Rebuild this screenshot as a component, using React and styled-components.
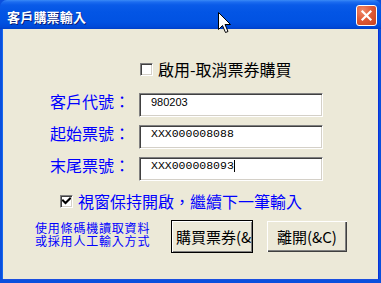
import React from "react";
import styled, { createGlobalStyle } from "styled-components";

const Global = createGlobalStyle`
  html, body { margin: 0; padding: 0; background: #ECE9D8; }
  body { width: 381px; height: 283px; overflow: hidden; }
`;

const CJK = `"Noto Sans CJK TC", "Noto Sans CJK SC", sans-serif`;

const Window = styled.div`
  position: relative;
  width: 381px;
  height: 283px;
  display: flex;
  flex-direction: column;
  box-sizing: border-box;
  background: #0A4FDD;
`;

const TitleBar = styled.div`
  height: 29px;
  flex: none;
  display: flex;
  align-items: flex-start;
  justify-content: space-between;
  padding: 0 4px 0 7px;
  background: linear-gradient(
    to bottom,
    #3A8AF6 0px,
    #1C6CF0 2px,
    #0A5BE8 5px,
    #0355E5 12px,
    #0152E2 22px,
    #0049D8 27px,
    #003FC8 29px
  );
  border-radius: 7px 7px 0 0;
`;

const Title = styled.div`
  margin-top: 8px;
  font-family: ${CJK};
  font-weight: 700;
  font-size: 13px;
  line-height: 17px;
  color: #fff;
  text-shadow: 1px 1px 0 #0A1E7A;
  letter-spacing: 0.2px;
`;

const CloseBtn = styled.div`
  margin-top: 5px;
  width: 21px;
  height: 21px;
  box-sizing: border-box;
  border: 1px solid #fff;
  border-radius: 3px;
  background: radial-gradient(circle at 30% 25%, #F08A6A 0%, #E05B38 45%, #C8421E 100%);
  display: flex;
  align-items: center;
  justify-content: center;
`;

const Body = styled.div`
  flex: 1;
  background: #ECE9D8;
  margin: 0 3px 4px 3px;
  padding-top: 31px;
  display: flex;
  flex-direction: column;
  box-shadow: -1px 0 0 #1667EE, 1px 0 0 #0831D9, 0 1px 0 #1B4FE0;
`;

const CheckRow = styled.div`
  display: flex;
  align-items: center;
  gap: 5px;
  height: 18px;
  padding-left: ${(p) => p.$indent}px;
  margin-top: ${(p) => p.$top || 0}px;
`;

const Box = styled.span`
  width: 13px;
  height: 13px;
  box-sizing: border-box;
  background: #fff;
  border-top: 1px solid #808080;
  border-left: 1px solid #808080;
  border-right: 1px solid #fff;
  border-bottom: 1px solid #fff;
  box-shadow: inset 1px 1px 0 #404040, inset -1px -1px 0 #D4D0C8;
  display: flex;
  align-items: center;
  justify-content: center;
  flex: none;
`;

const CheckLabel = styled.span`
  font-family: ${CJK};
  font-size: 16px;
  line-height: 18px;
  color: ${(p) => p.$color};
  white-space: nowrap;
`;

const Form = styled.div`
  display: grid;
  grid-template-columns: 89px 184px;
  grid-auto-rows: 24px;
  row-gap: 8px;
  padding-left: 47px;
  margin-top: 15px;
`;

const Label = styled.div`
  font-family: ${CJK};
  font-size: 16px;
  line-height: 16px;
  color: #0000FF;
  white-space: nowrap;
`;

const Field = styled.div`
  box-sizing: border-box;
  height: 24px;
  background: #fff;
  border-top: 1px solid #808080;
  border-left: 1px solid #808080;
  border-right: 1px solid #fff;
  border-bottom: 1px solid #fff;
  box-shadow: inset 1px 1px 0 #404040, inset -1px -1px 0 #D4D0C8;
  padding: 1px 0 0 11px;
  display: flex;
  align-items: flex-start;
`;

const FieldText = styled.span`
  font-family: ${(p) => (p.$mono ? `"Liberation Mono", monospace` : `"Liberation Sans", Arial, sans-serif`)};
  font-size: ${(p) => (p.$mono ? 11.5 : 11)}px;
  line-height: 14px;
  color: #000;
  white-space: nowrap;
`;

const Caret = styled.span`
  display: inline-block;
  width: 1px;
  height: 12px;
  background: #000;
  margin-top: 1px;
`;

const BottomRow = styled.div`
  display: flex;
  align-items: flex-start;
  padding-left: 32px;
  margin-top: 10px;
`;

const Hint = styled.div`
  width: 136px;
  margin-top: 1px;
  font-family: ${CJK};
  font-size: 12px;
  letter-spacing: 0.8px;
  line-height: 13px;
  color: #0000FF;
  white-space: nowrap;
`;

const HintLine = styled.div`
  height: 13px;
`;

const Button = styled.div`
  box-sizing: border-box;
  width: ${(p) => p.$w}px;
  height: ${(p) => p.$h}px;
  margin-top: ${(p) => p.$mt || 0}px;
  margin-left: ${(p) => p.$ml || 0}px;
  background: #ECE9D8;
  font-family: ${CJK};
  font-size: 15px;
  line-height: 17px;
  color: #000;
  white-space: nowrap;
  overflow: hidden;
  display: flex;
  align-items: center;
  justify-content: ${(p) => (p.$default ? "flex-start" : "center")};
  padding-left: ${(p) => (p.$default ? 4 : 0)}px;
  border: ${(p) => (p.$default ? "1px solid #000" : "none")};
  box-shadow: ${(p) =>
    p.$default
      ? "inset 1px 1px 0 #fff, inset -1px -1px 0 #808080"
      : "inset 1px 1px 0 #fff, inset -1px -1px 0 #404040, inset -2px -2px 0 #808080"};
`;

const Pointer = styled.svg`
  position: absolute;
  left: 218px;
  top: 12px;
`;

function Check({ checked }) {
  return (
    <Box>
      {checked && (
        <svg width="9" height="9" viewBox="0 0 9 9">
          <path d="M1 3.5 L3.5 6 L8 1.5" fill="none" stroke="#000" strokeWidth="2" strokeLinecap="square" />
        </svg>
      )}
    </Box>
  );
}

export default function App() {
  return (
    <>
      <Global />
      <Window>
        <TitleBar>
          <Title>客戶購票輸入</Title>
          <CloseBtn>
            <svg width="13" height="13" viewBox="0 0 13 13">
              <path d="M2.5 2.5 L10.5 10.5 M10.5 2.5 L2.5 10.5" stroke="#fff" strokeWidth="2.2" strokeLinecap="square" />
            </svg>
          </CloseBtn>
        </TitleBar>
        <Body>
          <CheckRow $indent={137}>
            <Check checked={false} />
            <CheckLabel $color="#000">啟用-取消票券購買</CheckLabel>
          </CheckRow>
          <Form>
            <Label>客戶代號：</Label>
            <Field>
              <FieldText>980203</FieldText>
            </Field>
            <Label>起始票號：</Label>
            <Field>
              <FieldText $mono>XXX000008088</FieldText>
            </Field>
            <Label>末尾票號：</Label>
            <Field>
              <FieldText $mono>XXX000008093</FieldText>
              <Caret />
            </Field>
          </Form>
          <CheckRow $indent={57} $top={11}>
            <Check checked />
            <CheckLabel $color="#0000FF">視窗保持開啟，繼續下一筆輸入</CheckLabel>
          </CheckRow>
          <BottomRow>
            <Hint>
              <HintLine>使用條碼機讀取資料</HintLine>
              <HintLine>或採用人工輸入方式</HintLine>
            </Hint>
            <Button $default $w={82} $h={33}>購買票券(&amp;B)</Button>
            <Button $w={80} $h={31} $mt={1} $ml={14}>離開(&amp;C)</Button>
          </BottomRow>
        </Body>
        <Pointer width="14" height="22" viewBox="0 0 14 22">
          <path d="M0.5 0.5 V17.5 L4.5 13.5 L7.5 20.5 L10 19.5 L7 12.5 H12.5 Z" fill="#fff" stroke="#000" strokeWidth="1" />
        </Pointer>
      </Window>
    </>
  );
}
